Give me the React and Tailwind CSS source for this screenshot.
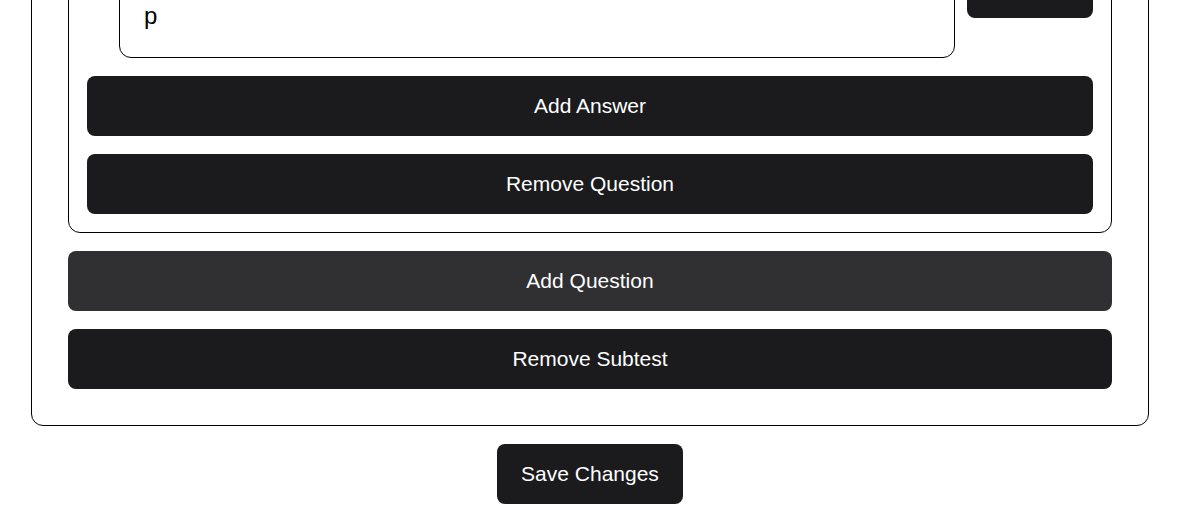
import React from 'react'

// Subtest editor, scrolled to the bottom of the form
export default function App() {
  const btn = 'w-full h-[60px] rounded-lg text-white text-[21px] leading-7 flex items-center justify-center'

  return (
    <div className="h-[523px] overflow-hidden bg-white" style={{ fontFamily: '"Liberation Sans", Arial, sans-serif' }}>
      <div className="-mt-[98px] pl-[31px] pr-[28px]">
        {/* Subtest card */}
        <div className="border border-black rounded-xl px-[36px] pt-[36px] pb-[36px] flex flex-col gap-[18px]">
          {/* Question card */}
          <div className="border border-black rounded-xl p-[18px] flex flex-col gap-[18px]">
            {/* Answer row */}
            <div className="flex gap-3 pl-8 items-start">
              <div className="flex-1 h-[100px] border border-black rounded-xl px-6 pt-[15px] text-[24px] leading-7 text-black whitespace-pre-line">
                {'\np'}
              </div>
              <button className="w-[126px] h-[60px] rounded-lg bg-[#1b1b1d]" aria-label="Remove answer"></button>
            </div>
            <button className={btn + ' bg-[#1b1b1d]'}>Add Answer</button>
            <button className={btn + ' bg-[#1b1b1d]'}>Remove Question</button>
          </div>
          <button className={btn + ' bg-[#303032]'}>Add Question</button>
          <button className={btn + ' bg-[#1b1b1d]'}>Remove Subtest</button>
        </div>

        <div className="flex justify-center mt-[18px]">
          <button className="h-[60px] px-6 rounded-lg bg-[#1b1b1d] text-white text-[21px] leading-7">Save Changes</button>
        </div>
      </div>
    </div>
  )
}
